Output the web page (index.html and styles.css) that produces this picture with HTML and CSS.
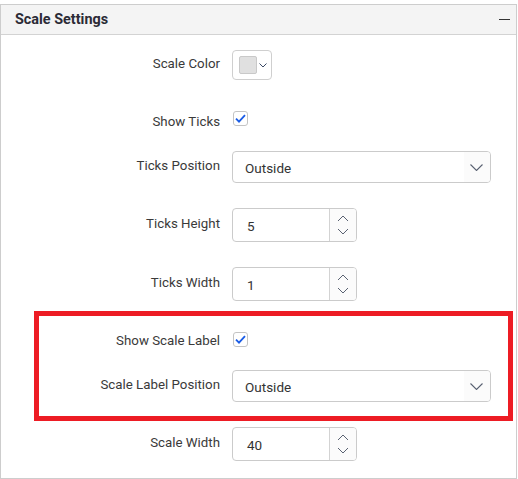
FILE: index.html
```html
<!DOCTYPE html>
<html>
<head>
<meta charset="utf-8">
<link rel="stylesheet" href="styles.css">
</head>
<body>
<div class="panel">
  <div class="panel-header">
    <span class="title">Scale Settings</span>
    <span class="collapse"></span>
  </div>
  <div class="panel-body">
    <div class="row row-color">
      <label class="label">Scale Color</label>
      <div class="colorpicker">
        <span class="swatch"></span>
        <svg class="cp-caret" width="8" height="5" viewBox="0 0 8 5"><path d="M0.5 0.5 L4 4 L7.5 0.5" fill="none" stroke="#3b4a66" stroke-width="1"/></svg>
      </div>
    </div>
    <div class="row row-check">
      <label class="label">Show Ticks</label>
      <span class="checkbox"><svg width="11" height="9" viewBox="0 0 11 9"><path d="M1 4.6 L4 7.6 L10 1.2" fill="none" stroke="#1a5ce6" stroke-width="1.8"/></svg></span>
    </div>
    <div class="row row-select">
      <label class="label">Ticks Position</label>
      <div class="dropdown">
        <span class="value">Outside</span>
        <span class="dd-icon"><svg width="13" height="7" viewBox="0 0 13 7"><path d="M0.5 0.5 L6.5 6.5 L12.5 0.5" fill="none" stroke="#5a6272" stroke-width="1.1"/></svg></span>
      </div>
    </div>
    <div class="row row-num">
      <label class="label">Ticks Height</label>
      <div class="numeric">
        <span class="value">5</span>
        <span class="spin"><svg width="12" height="20" viewBox="0 0 12 20"><path d="M1 6 L6 1 L11 6" fill="none" stroke="#5a6272" stroke-width="1"/><path d="M1 14 L6 19 L11 14" fill="none" stroke="#5a6272" stroke-width="1"/></svg></span>
      </div>
    </div>
    <div class="row row-num">
      <label class="label">Ticks Width</label>
      <div class="numeric">
        <span class="value">1</span>
        <span class="spin"><svg width="12" height="20" viewBox="0 0 12 20"><path d="M1 6 L6 1 L11 6" fill="none" stroke="#5a6272" stroke-width="1"/><path d="M1 14 L6 19 L11 14" fill="none" stroke="#5a6272" stroke-width="1"/></svg></span>
      </div>
    </div>
    <div class="highlight">
      <div class="row row-check">
        <label class="label">Show Scale Label</label>
        <span class="checkbox"><svg width="11" height="9" viewBox="0 0 11 9"><path d="M1 4.6 L4 7.6 L10 1.2" fill="none" stroke="#1a5ce6" stroke-width="1.8"/></svg></span>
      </div>
      <div class="row row-select">
        <label class="label">Scale Label Position</label>
        <div class="dropdown">
          <span class="value">Outside</span>
          <span class="dd-icon"><svg width="13" height="7" viewBox="0 0 13 7"><path d="M0.5 0.5 L6.5 6.5 L12.5 0.5" fill="none" stroke="#5a6272" stroke-width="1.1"/></svg></span>
        </div>
      </div>
    </div>
    <div class="row row-num">
      <label class="label">Scale Width</label>
      <div class="numeric">
        <span class="value">40</span>
        <span class="spin"><svg width="12" height="20" viewBox="0 0 12 20"><path d="M1 6 L6 1 L11 6" fill="none" stroke="#5a6272" stroke-width="1"/><path d="M1 14 L6 19 L11 14" fill="none" stroke="#5a6272" stroke-width="1"/></svg></span>
      </div>
    </div>
  </div>
</div>
</body>
</html>
```

FILE: styles.css
```css
* { box-sizing: border-box; }

body {
  margin: 0;
  background: #ffffff;
  font-family: Roboto, "Liberation Sans", Arial, sans-serif;
  color: #333333;
}

.panel {
  margin-top: 4px;
  width: 517px;
  height: 475px;
  border: 1px solid #cdcdcd;
  background: #ffffff;
}

.panel-header {
  height: 30px;
  background: #f4f4f4;
  border-bottom: 1px solid #d3d3d3;
  display: flex;
  align-items: center;
  justify-content: space-between;
  padding: 0 6px 0 14px;
}

.title {
  font-size: 14.4px;
  font-weight: 700;
  color: #2b2b36;
}

.collapse {
  width: 11px;
  height: 1px;
  background: #333;
  margin-bottom: 1px;
}

.panel-body {
  display: flex;
  flex-direction: column;
  gap: 25px;
  padding-top: 15px;
}

.row {
  display: flex;
  align-items: center;
  gap: 12px;
}

.label {
  width: 219px;
  text-align: right;
  font-size: 13.3px;
  line-height: 16px;
  color: #3a3a3a;
  margin-bottom: 2px;
}

.row-check {
  height: 21px;
  align-items: flex-end;
}

.row-check .label {
  margin-bottom: -3px;
  line-height: 15px;
}

.highlight .row-check .label {
  margin-bottom: -1px;
}

.colorpicker {
  width: 40px;
  height: 30px;
  border: 1px solid #cfcfcf;
  border-radius: 4px;
  display: flex;
  align-items: center;
  padding-left: 6px;
  gap: 2px;
}

.swatch {
  width: 18px;
  height: 18px;
  background: #e0e0e0;
  border: 1px solid #c9c9c9;
  border-radius: 2px;
}

.cp-caret { margin-top: 1px; }

.checkbox {
  width: 15px;
  height: 15px;
  border: 1px solid #c4c4c4;
  border-radius: 3px;
  background: #fff;
  display: flex;
  align-items: center;
  justify-content: center;
  margin-left: 1px;
}

.dropdown {
  width: 259px;
  height: 32px;
  border: 1px solid #cbcbcb;
  border-radius: 4px;
  display: flex;
  align-items: center;
  justify-content: space-between;
  overflow: hidden;
}

.value {
  font-size: 13.5px;
  color: #333;
  padding-left: 12px;
  margin-top: 1px;
}

.dd-icon {
  width: 26px;
  height: 100%;
  background: #fbfbfb;
  display: flex;
  align-items: center;
  justify-content: center;
  padding-right: 2px;
}

.numeric {
  width: 125px;
  height: 34px;
  border: 1px solid #cbcbcb;
  border-radius: 4px;
  display: flex;
  align-items: center;
  justify-content: space-between;
  overflow: hidden;
}

.numeric .value { padding-left: 14px; }

.spin {
  width: 27px;
  height: 100%;
  border-left: 1px solid #d3d3d3;
  background: #fbfbfb;
  display: flex;
  align-items: center;
  justify-content: center;
}

.highlight {
  position: relative;
  display: flex;
  flex-direction: column;
  gap: 23px;
}

.highlight::after {
  content: "";
  position: absolute;
  left: 33px;
  right: 3px;
  top: -15px;
  bottom: -19px;
  border: 5px solid #ed1c24;
  pointer-events: none;
}
```
